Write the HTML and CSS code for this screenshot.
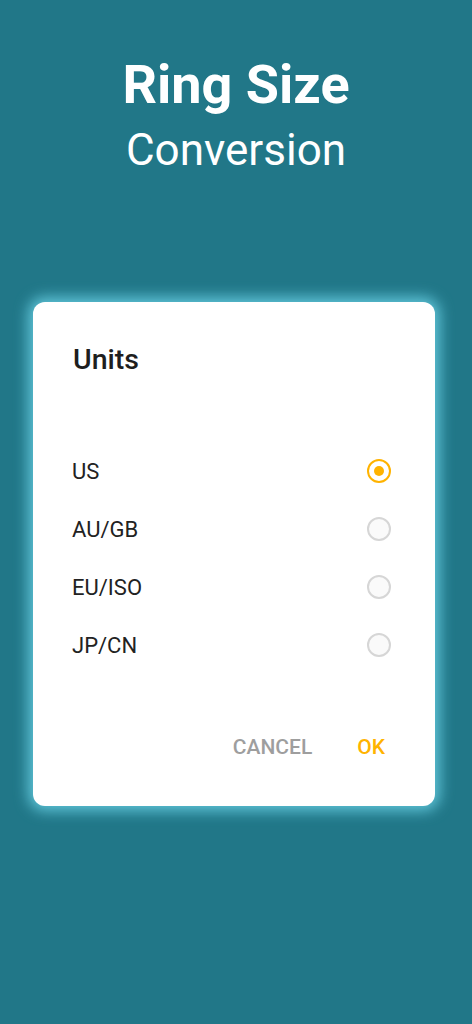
FILE: index.html
```html
<!DOCTYPE html>
<html>
<head>
<meta charset="utf-8">
<link rel="stylesheet" href="styles.css">
</head>
<body>
<div class="screen">
  <header class="hero">
    <div class="hero-title">Ring Size</div>
    <div class="hero-sub">Conversion</div>
  </header>
  <div class="dialog">
    <div class="dialog-title">Units</div>
    <div class="options">
      <div class="option"><span class="label">US</span><span class="radio checked"></span></div>
      <div class="option"><span class="label">AU/GB</span><span class="radio"></span></div>
      <div class="option"><span class="label">EU/ISO</span><span class="radio"></span></div>
      <div class="option"><span class="label">JP/CN</span><span class="radio"></span></div>
    </div>
    <div class="actions">
      <span class="btn cancel">CANCEL</span>
      <span class="btn ok">OK</span>
    </div>
  </div>
</div>
</body>
</html>
```
FILE: styles.css
```css
html, body {
  margin: 0;
  padding: 0;
}
body {
  background: #217788;
  font-family: Roboto, "Liberation Sans", sans-serif;
}
.screen {
  width: 472px;
  height: 1024px;
  display: flex;
  flex-direction: column;
  align-items: flex-start;
}
.hero {
  width: 100%;
  text-align: center;
  color: #fff;
  padding-top: 53px;
}
.hero-title {
  font-size: 54px;
  font-weight: 700;
  line-height: 64px;
}
.hero-sub {
  font-size: 44px;
  font-weight: 400;
  line-height: 56px;
  margin-top: 5px;
}
.dialog {
  margin-top: 124px;
  margin-left: 33px;
  width: 402px;
  height: 504px;
  box-sizing: border-box;
  background: #fff;
  border-radius: 12px;
  box-shadow: 0 0 14px 5px rgba(110, 215, 235, 0.8);
  padding: 40px 44px 0 40px;
  display: flex;
  flex-direction: column;
}
.dialog-title {
  font-size: 28.5px;
  font-weight: 500;
  color: #1e1e1e;
  line-height: 36px;
}
.options {
  margin-top: 64px;
  display: flex;
  flex-direction: column;
}
.option {
  height: 58px;
  display: flex;
  align-items: center;
  justify-content: space-between;
}
.label {
  font-size: 22px;
  color: #222;
  margin-left: -1px;
}
.radio {
  width: 24px;
  height: 24px;
  box-sizing: border-box;
  border-radius: 50%;
  border: 2px solid #d6d6d6;
  background: #fafafa;
  position: relative;
}
.radio.checked {
  border-color: #ffb300;
  background: #fff;
}
.radio.checked::after {
  content: "";
  position: absolute;
  left: 5px;
  top: 5px;
  width: 10px;
  height: 10px;
  border-radius: 50%;
  background: #ffb300;
}
.actions {
  margin-top: auto;
  margin-bottom: 47px;
  display: flex;
  justify-content: flex-end;
  align-items: center;
  gap: 45px;
  padding-right: 6px;
  line-height: 24px;
}
.btn {
  font-size: 21px;
  font-weight: 500;
}
.cancel { color: #9e9e9e; }
.ok { color: #ffb300; }
```
